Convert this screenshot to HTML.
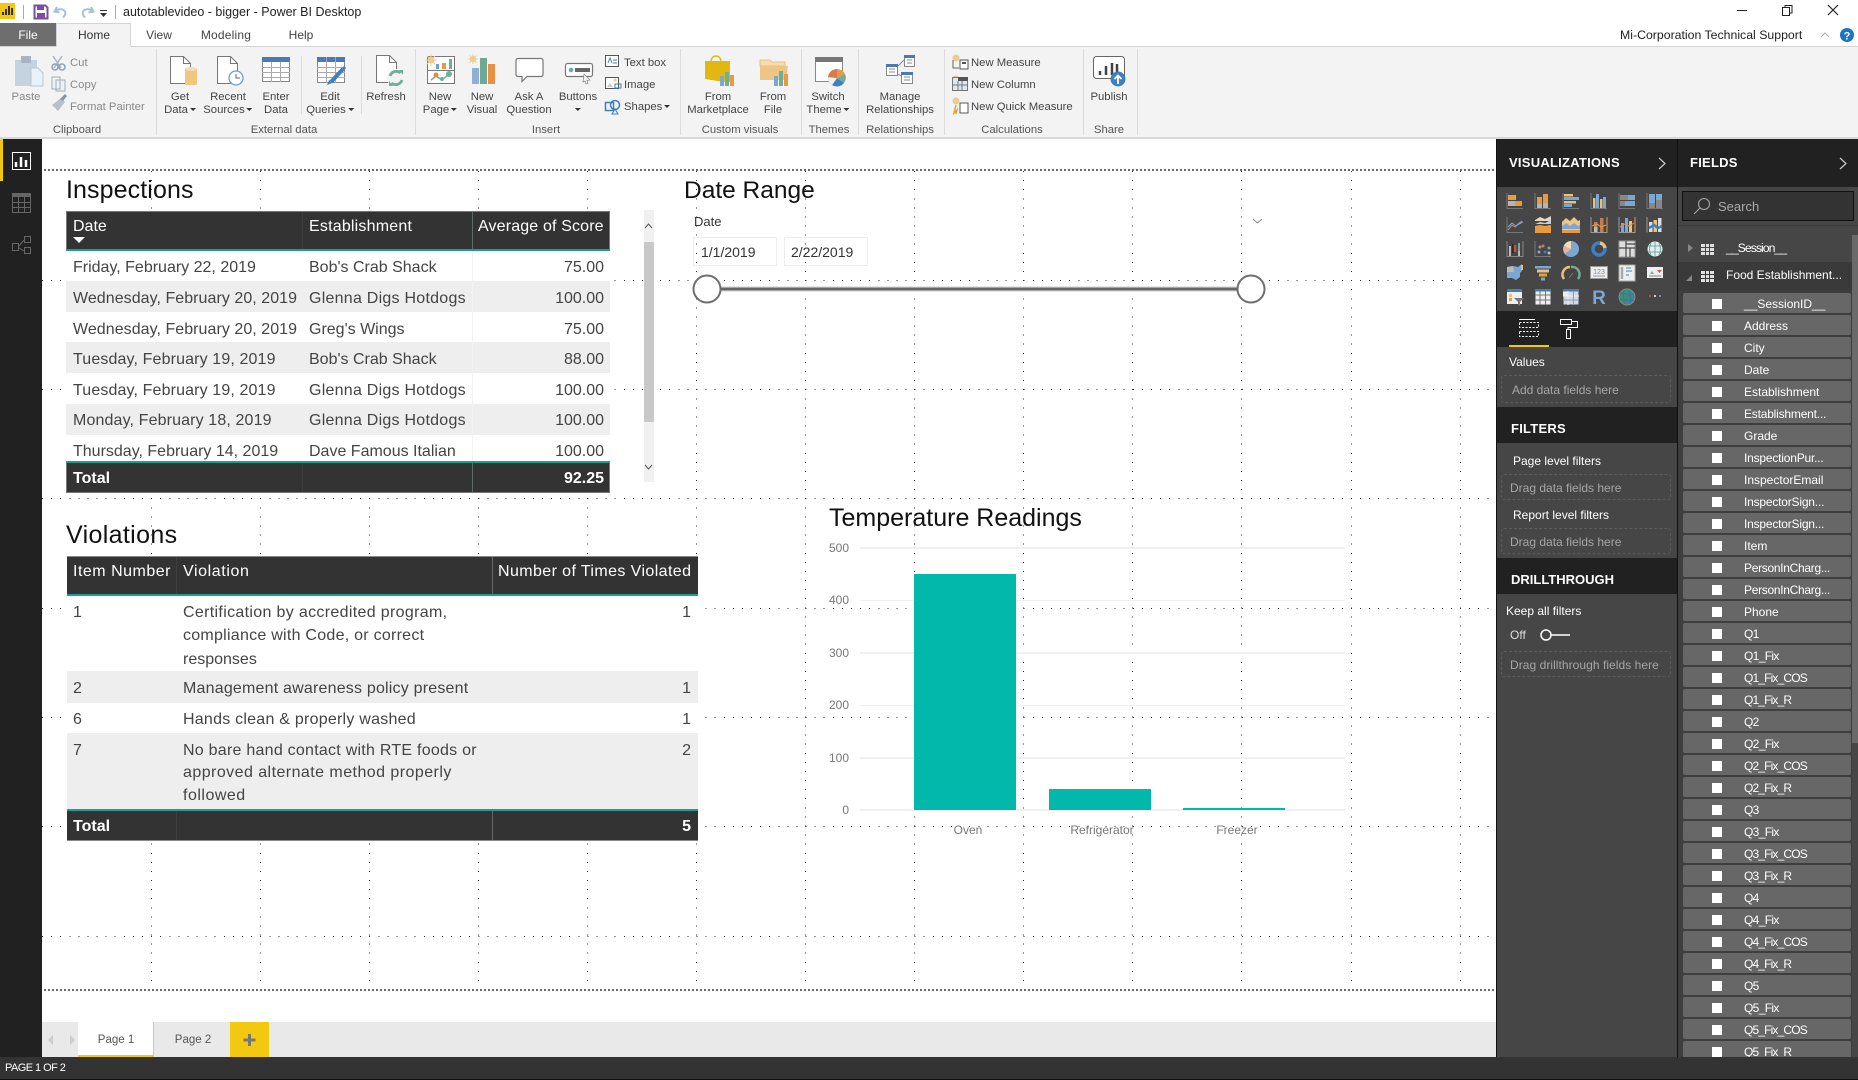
<!DOCTYPE html>
<html lang="en"><head><meta charset="utf-8"><title>autotablevideo - bigger - Power BI Desktop</title>
<style>
*{box-sizing:border-box}
html,body{margin:0;padding:0;width:1858px;height:1080px;overflow:hidden;background:#fff;font-family:"Liberation Sans",sans-serif}
.a,.t{position:absolute}
.t{white-space:nowrap;line-height:16px}
.c{transform:translateX(-50%);text-align:center}
.r{transform:translateX(-100%);text-align:right}
.rb{font-size:11.3px;color:#444;line-height:13px}
.rl{font-size:11.3px;color:#555;line-height:13px}
.ar{display:inline-block;width:0;height:0;border-left:3px solid transparent;border-right:3px solid transparent;border-top:3px solid #333;vertical-align:2px;margin-left:2px}
.sep{position:absolute;top:49px;width:1px;height:86px;background:#dcdcdc}
.sep2{position:absolute;width:1px;background:#dcdcdc}
.h{font-size:16px;color:#fff}
.b{font-size:16px;color:#444}
.tt{font-size:25px;color:#111;line-height:30px}
.ph{font-size:13px;font-weight:bold;color:#fff;letter-spacing:.25px}
.dz{position:absolute;border:1px dashed #5c5c5c;border-radius:3px;left:1501px;width:170px}
.g{font-size:12px;color:#a6a6a6}
.w{font-size:12px;color:#fff}
#fl{position:absolute;left:1683px;top:293px;width:168px}
.f{position:relative;height:20px;margin-bottom:2px;background:#676767;border-radius:2px;color:#fff;font-size:12px;line-height:22px;padding-left:61px;white-space:nowrap}
.f:before{content:"";position:absolute;left:29px;top:6px;width:10px;height:10px;background:#fff}
.q{letter-spacing:-.65px}
.k{letter-spacing:-.85px}
.e{letter-spacing:-.2px}
.ax{font-size:12px;color:#777}
</style></head><body>

<!-- dot grid -->
<svg class="a" style="left:0;top:0" width="1858" height="1080" shape-rendering="crispEdges">
<g stroke="#333" stroke-width="1" stroke-dasharray="1 8.09">
<line x1="42" y1="280.5" x2="1496" y2="280.5"/><line x1="42" y1="389.5" x2="1496" y2="389.5"/><line x1="42" y1="498.5" x2="1496" y2="498.5"/><line x1="42" y1="608.5" x2="1496" y2="608.5"/><line x1="42" y1="717.5" x2="1496" y2="717.5"/><line x1="42" y1="826.5" x2="1496" y2="826.5"/><line x1="42" y1="936.5" x2="1496" y2="936.5"/>
<line x1="151.5" y1="171" x2="151.5" y2="988"/><line x1="260.5" y1="171" x2="260.5" y2="988"/><line x1="369.5" y1="171" x2="369.5" y2="988"/><line x1="478.5" y1="171" x2="478.5" y2="988"/><line x1="587.5" y1="171" x2="587.5" y2="988"/><line x1="696.5" y1="171" x2="696.5" y2="988"/><line x1="805.5" y1="171" x2="805.5" y2="988"/><line x1="914.5" y1="171" x2="914.5" y2="988"/><line x1="1023.5" y1="171" x2="1023.5" y2="988"/><line x1="1132.5" y1="171" x2="1132.5" y2="988"/><line x1="1241.5" y1="171" x2="1241.5" y2="988"/><line x1="1351.5" y1="171" x2="1351.5" y2="988"/><line x1="1460.5" y1="171" x2="1460.5" y2="988"/>
</g></svg>
<div class="a" style="left:44px;top:169px;width:1452px;height:2px;background:repeating-linear-gradient(90deg,#6a6a6a 0 2px,transparent 2px 4px)"></div>
<div class="a" style="left:44px;top:989px;width:1452px;height:2px;background:repeating-linear-gradient(90deg,#6a6a6a 0 2px,transparent 2px 4px)"></div>

<!-- title bar -->
<div class="t" style="left:123px;top:4px;font-size:12.5px;color:#222">autotablevideo - bigger - Power BI Desktop</div>
<!-- tabs -->
<div class="a" style="left:0;top:23px;width:56px;height:23px;background:#6e6e6e"></div>
<div class="a" style="left:56px;top:23px;width:75px;height:24px;background:#f3f3f3;border:1px solid #d4d4d4;border-bottom:0;z-index:2"></div>
<div class="a" style="left:0;top:46px;width:1858px;height:93px;background:#f3f3f3;border-top:1px solid #d4d4d4;border-bottom:2px solid #d8d8d8"></div>
<div class="t c" style="left:28px;top:27px;font-size:12px;color:#fff;z-index:3">File</div>
<div class="t c" style="left:94px;top:27px;font-size:12px;color:#333;z-index:3">Home</div>
<div class="t c" style="left:159px;top:27px;font-size:12px;color:#444">View</div>
<div class="t c" style="left:226px;top:27px;font-size:12px;color:#444;letter-spacing:.2px">Modeling</div>
<div class="t c" style="left:301px;top:27px;font-size:12px;color:#444">Help</div>
<div class="t" style="left:1620px;top:27px;font-size:12.3px;color:#222">Mi-Corporation Technical Support</div>

<!-- ribbon text -->
<div class="sep" style="left:156px"></div><div class="sep" style="left:415px"></div><div class="sep" style="left:680px"></div><div class="sep" style="left:801px"></div><div class="sep" style="left:858px"></div><div class="sep" style="left:944px"></div><div class="sep" style="left:1083px"></div><div class="sep" style="left:1137px"></div>
<div class="sep2" style="left:301px;top:56px;height:58px"></div><div class="sep2" style="left:361px;top:56px;height:58px"></div>

<div class="t c rb" style="left:26px;top:91px;color:#888">Paste</div>
<div class="t rb" style="left:70px;top:57px;color:#888">Cut</div>
<div class="t rb" style="left:70px;top:79px;color:#888">Copy</div>
<div class="t rb" style="left:70px;top:101px;color:#888">Format Painter</div>
<div class="t c rl" style="left:77px;top:124px">Clipboard</div>

<div class="t c rb" style="left:180px;top:91px">Get<br>Data<i class="ar"></i></div>
<div class="t c rb" style="left:228px;top:91px">Recent<br>Sources<i class="ar"></i></div>
<div class="t c rb" style="left:276px;top:91px">Enter<br>Data</div>
<div class="t c rb" style="left:330px;top:91px">Edit<br>Queries<i class="ar"></i></div>
<div class="t c rb" style="left:386px;top:91px">Refresh</div>
<div class="t c rl" style="left:284px;top:124px">External data</div>

<div class="t c rb" style="left:440px;top:91px">New<br>Page<i class="ar"></i></div>
<div class="t c rb" style="left:482px;top:91px">New<br>Visual</div>
<div class="t c rb" style="left:529px;top:91px">Ask A<br>Question</div>
<div class="t c rb" style="left:578px;top:91px">Buttons<br><i class="ar" style="margin:0"></i></div>
<div class="t rb" style="left:624px;top:57px">Text box</div>
<div class="t rb" style="left:624px;top:79px">Image</div>
<div class="t rb" style="left:624px;top:101px">Shapes<i class="ar"></i></div>
<div class="t c rl" style="left:546px;top:124px">Insert</div>

<div class="t c rb" style="left:718px;top:91px">From<br>Marketplace</div>
<div class="t c rb" style="left:773px;top:91px">From<br>File</div>
<div class="t c rl" style="left:740px;top:124px">Custom visuals</div>
<div class="t c rb" style="left:828px;top:91px">Switch<br>Theme<i class="ar"></i></div>
<div class="t c rl" style="left:829px;top:124px">Themes</div>
<div class="t c rb" style="left:900px;top:91px">Manage<br>Relationships</div>
<div class="t c rl" style="left:900px;top:124px">Relationships</div>
<div class="t rb" style="left:971px;top:57px">New Measure</div>
<div class="t rb" style="left:971px;top:79px">New Column</div>
<div class="t rb" style="left:971px;top:101px">New Quick Measure</div>
<div class="t c rl" style="left:1012px;top:124px">Calculations</div>
<div class="t c rb" style="left:1109px;top:91px">Publish</div>
<div class="t c rl" style="left:1109px;top:124px">Share</div>

<!-- left nav -->
<div class="a" style="left:0;top:139px;width:42px;height:918px;background:#212121"></div>
<div class="a" style="left:0;top:139px;width:3px;height:42px;background:#f2c811"></div>

<!-- Inspections -->
<div class="t tt" style="left:66px;top:175px;letter-spacing:.1px">Inspections</div>
<div class="a" style="left:66px;top:251px;width:544px;height:30px;background:#fff"></div>
<div class="a" style="left:66px;top:281px;width:544px;height:31px;background:#eee"></div>
<div class="a" style="left:66px;top:312px;width:544px;height:30px;background:#fff"></div>
<div class="a" style="left:66px;top:342px;width:544px;height:31px;background:#eee"></div>
<div class="a" style="left:66px;top:373px;width:544px;height:31px;background:#fff"></div>
<div class="a" style="left:66px;top:404px;width:544px;height:31px;background:#eee"></div>
<div class="a" style="left:66px;top:435px;width:544px;height:27px;background:#fff"></div>
<div class="a" style="left:66px;top:211px;width:544px;height:40px;background:#333;border:1px solid #777;border-bottom:2px solid #1b9e94"></div>
<div class="a" style="left:66px;top:461px;width:544px;height:32px;background:#333;border:1px solid #777;border-top:2px solid #1b9e94"></div>
<div class="a" style="left:302px;top:212px;width:1px;height:37px;background:#3e3e3e"></div>
<div class="a" style="left:472px;top:212px;width:1px;height:37px;background:#5a6b6a"></div>
<div class="a" style="left:302px;top:463px;width:1px;height:29px;background:#3e3e3e"></div>
<div class="a" style="left:472px;top:463px;width:1px;height:29px;background:#5a6b6a"></div>
<div class="a" style="left:472px;top:251px;width:1px;height:210px;background:#f3f3f3"></div>
<div class="a" style="left:73px;top:237px;width:0;height:0;border-left:6px solid transparent;border-right:6px solid transparent;border-top:6px solid #fff"></div>
<div class="t h" style="left:73px;top:219px">Date</div>
<div class="t h" style="left:309px;top:219px;letter-spacing:.2px">Establishment</div>
<div class="t h" style="left:478px;top:219px;letter-spacing:.15px">Average of Score</div>
<div class="t b" style="left:73px;top:260px">Friday, February 22, 2019</div><div class="t b" style="left:309px;top:260px">Bob's Crab Shack</div><div class="t b r" style="left:604px;top:260px">75.00</div>
<div class="t b" style="left:73px;top:291px;letter-spacing:.05px">Wednesday, February 20, 2019</div><div class="t b" style="left:309px;top:291px;letter-spacing:.25px">Glenna Digs Hotdogs</div><div class="t b r" style="left:604px;top:291px">100.00</div>
<div class="t b" style="left:73px;top:322px;letter-spacing:.05px">Wednesday, February 20, 2019</div><div class="t b" style="left:309px;top:322px">Greg's Wings</div><div class="t b r" style="left:604px;top:322px">75.00</div>
<div class="t b" style="left:73px;top:352px;letter-spacing:.13px">Tuesday, February 19, 2019</div><div class="t b" style="left:309px;top:352px">Bob's Crab Shack</div><div class="t b r" style="left:604px;top:352px">88.00</div>
<div class="t b" style="left:73px;top:383px;letter-spacing:.13px">Tuesday, February 19, 2019</div><div class="t b" style="left:309px;top:383px;letter-spacing:.25px">Glenna Digs Hotdogs</div><div class="t b r" style="left:604px;top:383px">100.00</div>
<div class="t b" style="left:73px;top:413px;letter-spacing:.13px">Monday, February 18, 2019</div><div class="t b" style="left:309px;top:413px;letter-spacing:.25px">Glenna Digs Hotdogs</div><div class="t b r" style="left:604px;top:413px">100.00</div>
<div class="t b" style="left:73px;top:444px">Thursday, February 14, 2019</div><div class="t b" style="left:309px;top:444px">Dave Famous Italian</div><div class="t b r" style="left:604px;top:444px">100.00</div>
<div class="t h" style="left:73px;top:471px;font-weight:bold">Total</div><div class="t h r" style="left:604px;top:471px;font-weight:bold">92.25</div>
<div class="a" style="left:644px;top:210px;width:10px;height:272px;background:#f0f0f0"></div>
<div class="a" style="left:644px;top:242px;width:10px;height:180px;background:#c8c8c8"></div>

<!-- Violations -->
<div class="t tt" style="left:66px;top:520px;letter-spacing:.35px">Violations</div>
<div class="a" style="left:67px;top:596px;width:631px;height:75px;background:#fff"></div>
<div class="a" style="left:67px;top:671px;width:631px;height:32px;background:#eee"></div>
<div class="a" style="left:67px;top:703px;width:631px;height:30px;background:#fff"></div>
<div class="a" style="left:67px;top:733px;width:631px;height:77px;background:#eee"></div>
<div class="a" style="left:67px;top:556px;width:631px;height:40px;background:#333;border-top:1px solid #888;border-bottom:2px solid #1b9e94"></div>
<div class="a" style="left:67px;top:809px;width:631px;height:32px;background:#333;border-top:2px solid #1b9e94;border-bottom:1px solid #888"></div>
<div class="a" style="left:176px;top:557px;width:1px;height:37px;background:#3e3e3e"></div>
<div class="a" style="left:492px;top:557px;width:1px;height:37px;background:#666"></div>
<div class="a" style="left:176px;top:811px;width:1px;height:29px;background:#3e3e3e"></div>
<div class="a" style="left:492px;top:811px;width:1px;height:29px;background:#666"></div>
<div class="t h" style="left:73px;top:564px;letter-spacing:.5px">Item Number</div><div class="t h" style="left:183px;top:564px;letter-spacing:.6px">Violation</div><div class="t h" style="left:498px;top:564px;letter-spacing:.4px">Number of Times Violated</div>
<div class="t b" style="left:73px;top:605px">1</div><div class="t b" style="left:183px;top:605px;letter-spacing:.33px">Certification by accredited program,</div><div class="t b r" style="left:691px;top:605px">1</div>
<div class="t b" style="left:183px;top:628px;letter-spacing:.26px">compliance with Code, or correct</div>
<div class="t b" style="left:183px;top:652px">responses</div>
<div class="t b" style="left:73px;top:681px">2</div><div class="t b" style="left:183px;top:681px;letter-spacing:.2px">Management awareness policy present</div><div class="t b r" style="left:691px;top:681px">1</div>
<div class="t b" style="left:73px;top:712px">6</div><div class="t b" style="left:183px;top:712px;letter-spacing:.24px">Hands clean &amp; properly washed</div><div class="t b r" style="left:691px;top:712px">1</div>
<div class="t b" style="left:73px;top:743px">7</div><div class="t b" style="left:183px;top:743px;letter-spacing:.25px">No bare hand contact with RTE foods or</div><div class="t b r" style="left:691px;top:743px">2</div>
<div class="t b" style="left:183px;top:765px;letter-spacing:.45px">approved alternate method properly</div>
<div class="t b" style="left:183px;top:788px;letter-spacing:.5px">followed</div>
<div class="t h" style="left:73px;top:819px;font-weight:bold">Total</div><div class="t h r" style="left:691px;top:819px;font-weight:bold">5</div>

<!-- Date range -->
<div class="t tt" style="left:684px;top:176px;font-size:24.5px">Date Range</div>
<div class="t" style="left:694px;top:214px;font-size:13px;color:#333">Date</div>
<div class="a" style="left:693px;top:237px;width:84px;height:29px;border:1px solid #eee"></div>
<div class="a" style="left:784px;top:237px;width:84px;height:29px;border:1px solid #eee"></div>
<div class="t" style="left:701px;top:244px;font-size:14px;color:#333">1/1/2019</div>
<div class="t" style="left:791px;top:244px;font-size:14px;color:#333">2/22/2019</div>

<!-- chart -->
<div class="t tt" style="left:829px;top:503px;font-size:25px">Temperature Readings</div>
<div class="t ax r" style="left:849px;top:540px">500</div>
<div class="t ax r" style="left:849px;top:592px">400</div>
<div class="t ax r" style="left:849px;top:645px">300</div>
<div class="t ax r" style="left:849px;top:697px">200</div>
<div class="t ax r" style="left:849px;top:750px">100</div>
<div class="t ax r" style="left:849px;top:802px">0</div>
<div class="a" style="left:860px;top:547px;width:485px;height:2px;background:#f0f0f0"></div>
<div class="a" style="left:860px;top:600px;width:485px;height:1px;background:#f0f0f0"></div>
<div class="a" style="left:860px;top:652px;width:485px;height:2px;background:#f0f0f0"></div>
<div class="a" style="left:860px;top:705px;width:485px;height:1px;background:#f0f0f0"></div>
<div class="a" style="left:860px;top:757px;width:485px;height:2px;background:#f0f0f0"></div>
<div class="a" style="left:860px;top:809px;width:485px;height:2px;background:#f0f0f0"></div>
<div class="a" style="left:914px;top:574px;width:102px;height:236px;background:#01b8aa"></div>
<div class="a" style="left:1049px;top:789px;width:102px;height:21px;background:#01b8aa"></div>
<div class="a" style="left:1183px;top:808px;width:102px;height:2px;background:#01b8aa"></div>
<div class="t ax c" style="left:968px;top:822px">Oven</div>
<div class="t ax c" style="left:1102px;top:822px">Refrigerator</div>
<div class="t ax c" style="left:1237px;top:822px">Freezer</div>

<!-- page tabs -->
<div class="a" style="left:42px;top:1022px;width:1454px;height:35px;background:#e9e9e9"></div>
<div class="a" style="left:78px;top:1022px;width:76px;height:35px;background:#fff;border-right:1px solid #c8c8c8;border-bottom:2px solid #f2c811"></div>
<div class="t c" style="left:116px;top:1032px;font-size:11.5px;color:#555">Page 1</div>
<div class="t c" style="left:193px;top:1032px;font-size:11.5px;color:#555">Page 2</div>
<div class="a" style="left:230px;top:1022px;width:39px;height:35px;background:#f2c811"></div>

<!-- status -->
<div class="a" style="left:0;top:1057px;width:1858px;height:23px;background:#333;border-bottom:1px solid #111"></div>
<div class="t" style="left:5px;top:1060px;font-size:11px;letter-spacing:-.55px;color:#fff">PAGE 1 OF 2</div>

<!-- right panels -->
<div class="a" style="left:1496px;top:139px;width:362px;height:918px;background:#464646"></div>
<div class="a" style="left:1496px;top:139px;width:1px;height:918px;background:#111"></div>
<div class="a" style="left:1677px;top:139px;width:1px;height:918px;background:#111"></div>
<div class="a" style="left:1497px;top:139px;width:180px;height:48px;background:#212121"></div>
<div class="a" style="left:1678px;top:139px;width:180px;height:48px;background:#212121"></div>
<div class="t ph" style="left:1509px;top:155px">VISUALIZATIONS</div>
<div class="t ph" style="left:1690px;top:155px">FIELDS</div>
<div class="a" style="left:1497px;top:311px;width:180px;height:36px;background:#212121"></div>
<div class="a" style="left:1509px;top:345px;width:40px;height:2px;background:#f2c811"></div>
<div class="t w" style="left:1509px;top:354px">Values</div>
<div class="dz" style="top:375px;height:28px"></div>
<div class="t g" style="left:1512px;top:382px">Add data fields here</div>
<div class="a" style="left:1497px;top:407px;width:180px;height:36px;background:#212121"></div>
<div class="t ph" style="left:1511px;top:421px">FILTERS</div>
<div class="t w" style="left:1513px;top:453px">Page level filters</div>
<div class="dz" style="top:474px;height:26px"></div>
<div class="t g" style="left:1510px;top:480px">Drag data fields here</div>
<div class="t w" style="left:1513px;top:507px">Report level filters</div>
<div class="dz" style="top:528px;height:26px"></div>
<div class="t g" style="left:1510px;top:534px">Drag data fields here</div>
<div class="a" style="left:1497px;top:558px;width:180px;height:36px;background:#212121"></div>
<div class="t ph" style="left:1511px;top:572px;letter-spacing:0">DRILLTHROUGH</div>
<div class="t w" style="left:1506px;top:603px">Keep all filters</div>
<div class="t w" style="left:1510px;top:627px;color:#ddd">Off</div>
<div class="dz" style="top:651px;height:26px"></div>
<div class="t g" style="left:1510px;top:657px;letter-spacing:.05px">Drag drillthrough fields here</div>

<div class="a" style="left:1682px;top:191px;width:172px;height:30px;background:#333;border:1px solid #111"></div>
<div class="t" style="left:1718px;top:199px;font-size:13px;color:#aaa">Search</div>
<div class="a" style="left:1678px;top:225px;width:180px;height:1px;background:#3a3a3a"></div>
<div class="t" style="left:1726px;top:240px;font-size:12.3px;letter-spacing:-1px;color:#fff">__Session__</div>
<div class="a" style="left:1678px;top:262px;width:174px;height:28px;background:#3a3a3a"></div>
<div class="t" style="left:1726px;top:267px;font-size:12px;color:#fff">Food Establishment...</div>
<div class="a" style="left:1678px;top:290px;width:174px;height:767px;background:#3e3e3e"></div>
<div class="a" style="left:1852px;top:235px;width:6px;height:508px;background:#6a6a6a"></div>

<div id="fl" class="a" style="overflow:hidden;height:764px">
<div class="f">__SessionID__</div><div class="f">Address</div><div class="f">City</div><div class="f">Date</div><div class="f">Establishment</div><div class="f e">Establishment...</div><div class="f">Grade</div><div class="f e">InspectionPur...</div><div class="f">InspectorEmail</div><div class="f e">InspectorSign...</div><div class="f e">InspectorSign...</div><div class="f">Item</div><div class="f" style="letter-spacing:-.3px">PersonInCharg...</div><div class="f" style="letter-spacing:-.3px">PersonInCharg...</div><div class="f">Phone</div><div class="f q">Q1</div><div class="f q">Q1_Fix</div><div class="f k">Q1_Fix_COS</div><div class="f k">Q1_Fix_R</div><div class="f q">Q2</div><div class="f q">Q2_Fix</div><div class="f k">Q2_Fix_COS</div><div class="f k">Q2_Fix_R</div><div class="f q">Q3</div><div class="f q">Q3_Fix</div><div class="f k">Q3_Fix_COS</div><div class="f k">Q3_Fix_R</div><div class="f q">Q4</div><div class="f q">Q4_Fix</div><div class="f k">Q4_Fix_COS</div><div class="f k">Q4_Fix_R</div><div class="f q">Q5</div><div class="f q">Q5_Fix</div><div class="f k">Q5_Fix_COS</div><div class="f k">Q5_Fix_R</div>
</div>

<!-- icon overlay -->
<svg class="a" style="left:0;top:0;z-index:5;pointer-events:none" width="1858" height="1080" fill="none">
<!-- title bar -->
<rect x="0" y="3" width="15" height="16" fill="#f2c811"/><path d="M3 15v-3M6 15V9M9 15V6M12 15V8" stroke="#333" stroke-width="2"/>
<path d="M23.500 5v14" stroke="#aaa"/>
<path d="M34.500 5.500h11l2 2v11h-13z" stroke="#7a4f9e" stroke-width="2"/><rect x="37" y="6" width="7" height="4" fill="#7a4f9e"/><rect x="37" y="13" width="8" height="5" fill="#7a4f9e"/>
<path d="M57 7l-2.500 4.500 5 1M55 11.500c3-3 8-3 10 0 1 2 0 4-2 6" stroke="#a9bfd6" stroke-width="2"/>
<path d="M91 7l2.500 4.500-5 1M93 11.500c-3-3-8-3-10 0-1 2 0 4 2 6" stroke="#a9bfd6" stroke-width="2"/>
<path d="M100 10.500h7" stroke="#333"/><path d="M100 13l3.500 4 3.500-4z" fill="#333"/>
<path d="M115.500 5v14" stroke="#aaa"/>
<!-- window controls -->
<path d="M1737 10.500h10" stroke="#222"/><path d="M1782.500 7.500h7v8h-7zM1785 7V5.500h7v7.500h-2.500" stroke="#222"/><path d="M1828 5l10 10M1838 5l-10 10" stroke="#222" stroke-width="1.200"/>
<path d="M1821 37l4-4 4 4" stroke="#aaa"/>
<circle cx="1847" cy="35" r="7" fill="#1b74c8"/><text x="1847" y="39.500" font-family="Liberation Sans" font-size="11" font-weight="bold" fill="#fff" text-anchor="middle">?</text>

<!-- paste / clipboard -->
<rect x="15" y="60" width="22" height="26" fill="#c5d2e0"/><rect x="21" y="56" width="10" height="7" fill="#a8b4c2"/><path d="M31 68h7l5 5v13H31z" fill="#eaf1f8" stroke="#b4c8dc"/>
<path d="M53 56l8 12M62 56l-8 12" stroke="#a9b4c0" stroke-width="1.500"/><circle cx="55" cy="67" r="3" stroke="#8aa0b8" stroke-width="1.500"/><circle cx="62" cy="67" r="3" stroke="#8aa0b8" stroke-width="1.500"/>
<path d="M52 77h8v12h-8zM56 80h9v11h-9z" fill="#eef2f6" stroke="#a0aebc"/>
<path d="M52 105l9-7 4 4-7 9z" fill="#b8c0c8"/><path d="M60 99l5-5 2 2-4 5z" fill="#8a96a2"/>
<!-- get data -->
<path d="M170.500 56.500h13l7 7v20h-20z" fill="#fff" stroke="#777"/><path d="M183.500 56.500v7h7" stroke="#777"/>
<rect x="185" y="69" width="12" height="16" rx="1" fill="#efc77f"/><ellipse cx="191" cy="69" rx="6" ry="2" fill="#f5dcae"/>
<!-- recent -->
<path d="M217.500 56.500h13l7 7v20h-20z" fill="#fff" stroke="#777"/><path d="M230.500 56.500v7h7" stroke="#777"/>
<circle cx="236" cy="78" r="7" fill="#fff" stroke="#6f9fcf" stroke-width="1.300"/><path d="M236 74v4h4" stroke="#666"/>
<!-- enter data -->
<rect x="262.500" y="57.500" width="27" height="24" fill="#fff" stroke="#888"/><rect x="262" y="57" width="28" height="5" fill="#4a7ab0"/><path d="M262 67.500h28M262 72.500h28M262 77.500h28M271.500 62v20M280.500 62v20" stroke="#aaa"/>
<!-- edit queries -->
<rect x="317.500" y="57.500" width="27" height="25" fill="#fff" stroke="#888"/><rect x="317" y="57" width="28" height="5" fill="#4a7ab0"/><path d="M317 67.500h28M317 72.500h28M317 77.500h28M326.500 57v26M335.500 57v26" stroke="#aaa"/>
<path d="M331 82l12-13" stroke="#3f7fbf" stroke-width="4"/><path d="M327 85l2-5 3 3z" fill="#3f7fbf"/><path d="M343 69l2-2" stroke="#3f7fbf" stroke-width="3"/>
<!-- refresh -->
<path d="M376.500 55.500h13l7 7v20h-20z" fill="#fff" stroke="#777"/><path d="M389.500 55.500v7h7" stroke="#777"/>
<circle cx="396" cy="78" r="9" fill="#f3f3f3"/><path d="M390 76a6.500 6.500 0 0 1 10.500-3M402 80a6.500 6.500 0 0 1-10.500 3" stroke="#6fae9b" stroke-width="2.800"/><path d="M399 70l4 0 0 5zM393 86l-4 0 0-5z" fill="#6fae9b"/>
<!-- new page -->
<rect x="427.500" y="56.500" width="27" height="27" fill="#fff" stroke="#777"/><path d="M428 70.500h26" stroke="#777"/><path d="M431 80l5-4 6 4 6-5" stroke="#6fae9b" stroke-width="1.500"/><circle cx="436" cy="75" r="2.500" fill="#ea8a3c"/><circle cx="442" cy="79" r="2" fill="#6fae9b"/><circle cx="449" cy="74" r="3" fill="#6fae9b"/><rect x="436" y="64" width="3" height="5" fill="#6f9fcf"/><rect x="442" y="63" width="4" height="6" fill="#ea9a3c"/><rect x="449" y="59" width="3" height="10" fill="#6fae9b"/>
<circle cx="431" cy="60" r="3.500" fill="#eecb8e"/><path d="M431 54v12M425 60h12M427 56l8 8M435 56l-8 8" stroke="#eecb8e"/>
<!-- new visual -->
<rect x="472" y="68" width="7" height="16" fill="#8db0d4"/><rect x="480" y="58" width="7" height="26" fill="#70a896"/><rect x="488" y="64" width="7" height="20" fill="#ea8f45"/>
<circle cx="473" cy="59" r="3" fill="#eecb8e"/><path d="M473 54v10M468 59h10M469.500 55.500l7 7M476.500 55.500l-7 7" stroke="#eecb8e"/>
<!-- ask -->
<path d="M518 58.500h23a2 2 0 0 1 2 2v14a2 2 0 0 1-2 2h-14l-5 5v-5h-4a2 2 0 0 1-2-2v-14a2 2 0 0 1 2-2z" fill="#fff" stroke="#777" stroke-width="1.200"/>
<!-- buttons -->
<rect x="565.500" y="63.500" width="27" height="13" rx="2" fill="#fff" stroke="#777" stroke-width="1.200"/><circle cx="571" cy="70" r="2.300" fill="#6f9fcf"/><rect x="575" y="68" width="15" height="4" fill="#666"/><path d="M584 74l6 6-3 .5 1 3-2 .5-1-3-2 1z" fill="#f3f3f3" stroke="#888" stroke-width=".7"/>
<!-- text box / image / shapes -->
<rect x="605.500" y="55.500" width="13" height="11" fill="#fff" stroke="#555"/><path d="M608 63l2-5 2 5M613 60h4M613 63h4" stroke="#3f7fbf"/>
<rect x="605.500" y="77.500" width="13" height="11" fill="#fff" stroke="#555"/><path d="M607 87l3-4 3 4z" fill="#bcd0e4"/><circle cx="615" cy="80" r="1.500" fill="#eecb8e"/><rect x="615" y="84" width="6" height="4" stroke="#3f7fbf"/>
<rect x="605.500" y="102.500" width="8" height="8" stroke="#3f7fbf" stroke-width="1.500"/><circle cx="615" cy="105" r="4.500" stroke="#3f7fbf" stroke-width="1.500"/><path d="M612 114l3-5 3 5z" stroke="#3f7fbf"/>
<!-- marketplace -->
<path d="M711 62c0-8 10-8 10 0" stroke="#e2b70f" stroke-width="1.500"/><path d="M705 61h25v21l-6 0-19-3z" fill="#e2b70f"/>
<rect x="720" y="76" width="4" height="10" fill="#7ba7d3"/><rect x="725" y="72" width="4" height="14" fill="#6fae9b"/><rect x="730" y="75" width="4" height="11" fill="#ea9a3c"/>
<!-- from file -->
<path d="M760 60h10l2 2h13v4h-25z" fill="#f5ddb2" stroke="#e8c27c"/><path d="M760 66h28l-2 14h-26z" fill="#eec584"/>
<rect x="774" y="76" width="4" height="10" fill="#7ba7d3"/><rect x="779" y="71" width="4" height="15" fill="#6fae9b"/><rect x="784" y="74" width="4" height="12" fill="#ea9a3c"/>
<!-- switch theme -->
<rect x="815.500" y="57.500" width="27" height="24" fill="#fff" stroke="#888"/><rect x="815" y="57" width="28" height="5" fill="#777"/>
<path d="M837 78l0-9a9 9 0 0 1 8 5z" fill="#ea9a3c"/><path d="M837 78l8-4a9 9 0 0 1-1 9z" fill="#6fae9b"/><path d="M837 78l7 5a9 9 0 0 1-12 2z" fill="#3f7fbf"/><path d="M837 78l-5 7a9 9 0 0 1-4-8z" fill="#f3f3f3" stroke="#ccc" stroke-width=".5"/><path d="M837 78l-9-1a9 9 0 0 1 9-8z" fill="#d97a4a"/>
<!-- relationships -->
<rect x="886.500" y="64.500" width="11" height="11" fill="#fff" stroke="#888"/><rect x="886" y="64" width="12" height="3" fill="#4a7ab0"/>
<rect x="904.500" y="55.500" width="10" height="11" fill="#fff" stroke="#888"/><rect x="904" y="55" width="11" height="3" fill="#4a7ab0"/>
<rect x="901.500" y="72.500" width="11" height="11" fill="#fff" stroke="#888"/><rect x="901" y="72" width="12" height="3" fill="#4a7ab0"/>
<path d="M898 66l6-6M898 74l3 2M889 69h6M889 72h6M907 60h5M907 63h5M904 77h6M904 80h6" stroke="#888"/>
<!-- calculations -->
<circle cx="956" cy="58" r="3.500" fill="#eecb8e"/><path d="M953 60v8h6" stroke="#666"/><rect x="960" y="60" width="8" height="9" fill="#fff" stroke="#555"/><rect x="962" y="62" width="4" height="2" fill="#555"/>
<circle cx="956" cy="79" r="3.500" fill="#eecb8e"/><rect x="952.500" y="77.500" width="15" height="13" fill="#dfe7ef" stroke="#777"/><rect x="958" y="77" width="10" height="4" fill="#555"/><path d="M958 81v9M962 81v9M952 85h16" stroke="#777"/>
<circle cx="956" cy="101" r="3.500" fill="#eecb8e"/><path d="M956 105l-2 8 3-3-1 4" stroke="#e0a23c" stroke-width="1.500"/><rect x="960" y="103" width="8" height="10" fill="#fff" stroke="#555"/>
<!-- publish -->
<rect x="1093.500" y="56.500" width="31" height="22" rx="3" fill="#fff" stroke="#666"/><path d="M1100 75v-4M1106 75v-9M1112 75v-12M1117 72v-8" stroke="#444" stroke-width="2.500"/>
<circle cx="1118" cy="79" r="7.500" fill="#3f7fbf"/><path d="M1118 84v-8M1114.500 79l3.500-3.500 3.500 3.500" stroke="#fff" stroke-width="1.800"/>

<!-- left nav -->
<rect x="12.500" y="152.500" width="18" height="17" stroke="#fff"/><path d="M16 167v-5M21 167v-10M26 167v-7" stroke="#fff" stroke-width="2.500"/>
<rect x="12.500" y="193.500" width="18" height="19" stroke="#666"/><rect x="12" y="193" width="19" height="4" fill="#666"/><path d="M12 202.500h19M12 207.500h19M18.500 193v20M24.500 193v20" stroke="#666"/>
<path d="M12.500 243.500h6v7h-6zM24.500 236.500h6v6h-6zM24.500 247.500h6v6h-6zM19 246l5-6M19 248l5 3" stroke="#666"/>

<!-- inspection scrollbar arrows -->
<path d="M645 228l3.500-4 3.500 4M645 465l3.500 4 3.500-4" stroke="#555"/>
<!-- slicer -->
<path d="M1253 219l4.500 4 4.500-4" stroke="#888"/>
<path d="M721 289h517" stroke="#e6e6e6" stroke-width="6"/><path d="M721 289h517" stroke="#666" stroke-width="3"/>
<circle cx="707" cy="289" r="13.500" fill="#fff" stroke="#6e6e6e" stroke-width="2"/><circle cx="1251" cy="289" r="13.500" fill="#fff" stroke="#6e6e6e" stroke-width="2"/>
<!-- tabs -->
<path d="M53 1035l-5 5 5 5z" fill="#ccc"/><path d="M70 1035l5 5-5 5z" fill="#ccc"/>
<path d="M249.500 1034v12M243.500 1040h12" stroke="#777" stroke-width="3"/>

<!-- panel chevrons -->
<path d="M1659 158l6 5.500-6 5.500M1840 158l6 5.500-6 5.500" stroke="#ccc" stroke-width="1.200"/>
<!-- search -->
<circle cx="1704" cy="204" r="5.500" stroke="#aaa"/><path d="M1700 208l-6 6" stroke="#aaa"/>
<!-- table icons -->
<path d="M1688 244l5 4-5 4z" fill="#888"/><path d="M1692 275v6h-6z" fill="#888"/>
<rect x="1701" y="244" width="13" height="11" fill="#e0e0e0"/><path d="M1705.500 244v11M1709.500 244v11M1701 247.500h13M1701 251.500h13" stroke="#464646"/>
<rect x="1701" y="271" width="13" height="11" fill="#e0e0e0"/><path d="M1705.500 271v11M1709.500 271v11M1701 274.500h13M1701 278.500h13" stroke="#3a3a3a"/>
<!-- format tabs -->
<path d="M1519 319.500h16" stroke="#fff"/><path d="M1519.500 322.500h19v5h-19zM1519.500 331.500h19v5h-19z" stroke="#fff" stroke-dasharray="2 1.500"/>
<path d="M1560.500 319.500h11v5h-11zM1572 321.500h5.500v6h-9.500v2M1566.500 329.500h4v9h-4z" stroke="#fff"/>
<!-- toggle -->
<circle cx="1546" cy="635" r="5" stroke="#fff" stroke-width="1.500"/><path d="M1551 635h19" stroke="#fff" stroke-width="1.500"/>

<!-- VIZ ICONS row 1 -->
<g transform="translate(1515 201)"><path d="M-8-8V7.500H8" stroke="#777"/><rect x="-7" y="-6" width="7" height="5" fill="#ea9a3c"/><rect x="0" y="-6" width="1" height="5" fill="#b5b5b5"/><rect x="-7" y="0" width="7" height="5" fill="#b5b5b5"/><rect x="0" y="0" width="7" height="5" fill="#ea9a3c"/></g>
<g transform="translate(1543 201)"><path d="M-8-8V7.500H8" stroke="#777"/><rect x="-6" y="-4" width="5" height="7" fill="#ea9a3c"/><rect x="-6" y="3" width="5" height="4" fill="#b5b5b5"/><rect x="0" y="-7" width="5" height="9" fill="#ea9a3c"/><rect x="0" y="2" width="5" height="5" fill="#b5b5b5"/></g>
<g transform="translate(1571 201)"><path d="M-8-8V7.500H8" stroke="#777"/><rect x="-7" y="-7" width="9" height="2.500" fill="#e8c27c"/><rect x="-7" y="-4" width="15" height="3" fill="#7ba7d3"/><rect x="-7" y="0" width="12" height="2.500" fill="#e8c27c"/><rect x="-7" y="3" width="8" height="3" fill="#7ba7d3"/></g>
<g transform="translate(1599 201)"><path d="M-8-8V7.500H8" stroke="#777"/><rect x="-6" y="-3" width="2.500" height="10" fill="#e8c27c"/><rect x="-3" y="-7" width="3" height="14" fill="#7ba7d3"/><rect x="1" y="-2" width="2.500" height="9" fill="#e8c27c"/><rect x="4" y="-4" width="3" height="11" fill="#7ba7d3"/></g>
<g transform="translate(1627 201)"><path d="M-8-8V7.500H8" stroke="#777"/><rect x="-7" y="-6" width="8" height="5" fill="#888"/><rect x="1" y="-6" width="7" height="5" fill="#7ba7d3"/><rect x="-7" y="0" width="5" height="5" fill="#888"/><rect x="-2" y="0" width="10" height="5" fill="#7ba7d3"/></g>
<g transform="translate(1655 201)"><path d="M-8-8V7.500H8" stroke="#777"/><rect x="-6" y="-7" width="6" height="9" fill="#7ba7d3"/><rect x="-6" y="2" width="6" height="5" fill="#888"/><rect x="1" y="-7" width="6" height="6" fill="#7ba7d3"/><rect x="1" y="-1" width="6" height="8" fill="#888"/></g>
<!-- row 2 -->
<g transform="translate(1515 225)"><path d="M-8-8V7.500H8" stroke="#777"/><path d="M-7 5l4-5 3 2 3-3 4-3" stroke="#d98a7a"/><path d="M-7 2l4-4 4 3 3-2 4-2" stroke="#7ba7d3"/></g>
<g transform="translate(1543 225)"><path d="M-8-5l5-3 5 2 6-3v5h-16z" fill="#e6d6bc"/><path d="M-8-1l5-2 5 1 6-3v4h-16z" fill="#bcd0e4"/><path d="M-8 1l5-1 5 1 6-1V8H-8z" fill="#ea9a3c"/></g>
<g transform="translate(1571 225)"><path d="M-9 8V-3l4-4 4 3 4-4 4 4 2-1V8z" fill="#eec584"/><path d="M-9 1l4-3 4 3 4-3 4 3 2-1v4H-9z" fill="#7ba7d3"/><path d="M-9 5H9v3H-9z" fill="#ea9a3c"/></g>
<g transform="translate(1599 225)"><path d="M-8-8V7.500H8M8-8V8" stroke="#999"/><path d="M8-8V8" stroke="#ea9a3c"/><rect x="-5" y="-3" width="3.500" height="5" fill="#c87a50"/><rect x="-5" y="2" width="3.500" height="5" fill="#bbb"/><rect x="1" y="-7" width="3.500" height="14" fill="#c87a50"/><path d="M-7 1l5-2 4 3 5-2" stroke="#ea9a3c"/></g>
<g transform="translate(1627 225)"><path d="M-8-8V7.500H8" stroke="#999"/><path d="M8-8V8" stroke="#ea9a3c"/><rect x="-6" y="-2" width="3" height="9" fill="#7ba7d3"/><rect x="-2" y="-7" width="3" height="14" fill="#7ba7d3"/><rect x="2" y="-4" width="3" height="11" fill="#e8c27c"/><path d="M-7 2l5-3 4 2 5-3" stroke="#d98a5a"/></g>
<g transform="translate(1655 225)"><path d="M-8-8V7.500" stroke="#999"/><rect x="-6" y="-3" width="3.500" height="10" fill="#ddd"/><rect x="-1.500" y="-5" width="3.500" height="12" fill="#e8c27c"/><rect x="3" y="-7" width="3.500" height="14" fill="#ddd"/><path d="M-6 3l5-3 4 3 4-2" stroke="#3f7fbf" stroke-width="2.500"/></g>
<!-- row 3 -->
<g transform="translate(1515 249)"><path d="M-8-8V7.500H8M8-8V8" stroke="#888"/><path d="M-5-3V7M4-6V7" stroke="#bbb" stroke-width="2"/><path d="M-2-5V4" stroke="#222" stroke-width="1.500"/><path d="M0-4V3" stroke="#c9503f" stroke-width="2.500"/><path d="M4-6V2" stroke="#6fae9b" stroke-width="2"/></g>
<g transform="translate(1543 249)"><path d="M-8-8V7.500H8" stroke="#777"/><circle cx="-4" cy="3" r="1.500" fill="#7ba7d3"/><circle cx="0" cy="-3" r="1.500" fill="#c87a50"/><circle cx="2" cy="3" r="1.500" fill="#3f7fbf"/><circle cx="6" cy="-1" r="1.500" fill="#6fae9b"/><circle cx="-3" cy="-2" r="1.500" fill="#999"/><circle cx="6" cy="4" r="1.500" fill="#bbb"/></g>
<g transform="translate(1571 249)"><circle r="8" fill="#7ba7d3"/><path d="M0 0V-8A8 8 0 0 0-7 -3z" fill="#f3dcb4"/><path d="M0 0L-7-3A8 8 0 0 0-6 5z" fill="#e8b0a0"/></g>
<g transform="translate(1599 249)"><circle r="6" stroke="#3f7fbf" stroke-width="3.500"/><path d="M1-6A6 6 0 0 1 6-1" stroke="#e8c27c" stroke-width="3.500"/></g>
<g transform="translate(1627 249)"><rect x="-8" y="-8" width="16" height="16" fill="#ddd" stroke="#999"/><path d="M-8-1H8M-1-8V8M3-1V8M-1-5H8" stroke="#464646" stroke-width="1.200"/></g>
<g transform="translate(1655 249)"><circle r="7.500" fill="#e6f0f2"/><path d="M-7-3H7M-7 3H7M0-7V7M-4-6C-6-2-6 2-4 6M4-6C6-2 6 2 4 6" stroke="#6fae9b"/></g>
<!-- row 4 -->
<g transform="translate(1515 273)"><path d="M-8-6l6-1 5 1 4-3v7l-2 2v4l-4 3-4-2-5 0z" fill="#7ba7d3"/><path d="M-8-6l6-1 1 6-7 0z" fill="#bbb"/><path d="M7-8v5" stroke="#e8c27c" stroke-width="2"/></g>
<g transform="translate(1543 273)"><path d="M-8-7H8v2.500H-8z" fill="#7ba7d3"/><path d="M-6-3.500H6v3H-6z" fill="#e8c27c"/><path d="M-4 .5H4v3H-4z" fill="#e0a23c"/><path d="M-2 4.500H2v3H-2z" fill="#7ba7d3"/></g>
<g transform="translate(1571 273)"><path d="M-7 6a7.500 7.500 0 0 1 6-12" stroke="#e8c27c" stroke-width="2.500"/><path d="M0-6a7.500 7.500 0 0 1 7 12" stroke="#6fae9b" stroke-width="2.500"/><path d="M-2 5l4-5" stroke="#777"/></g>
<g transform="translate(1599 273)"><rect x="-8.500" y="-6.500" width="17" height="12" fill="#eee" stroke="#999"/><text y="1" font-family="Liberation Sans" font-size="7" fill="#6f8fb0" text-anchor="middle">123</text><path d="M-6 3H6" stroke="#999"/></g>
<g transform="translate(1627 273)"><rect x="-8" y="-8" width="16" height="16" fill="#eee" stroke="#aaa"/><path d="M-5-6V6" stroke="#aaa" stroke-width="2.500"/><path d="M-1-5h5M-1-2h6M-1 2h3" stroke="#7ba7d3" stroke-width="1.500"/></g>
<g transform="translate(1655 273)"><rect x="-8" y="-6" width="16" height="11" fill="#eee"/><path d="M-5 1l2-3 2 3z" fill="#6fae9b"/><path d="M2-3h5l-2.500 3z" fill="#d9534f"/><path d="M-6 3h12" stroke="#888"/></g>
<!-- row 5 -->
<g transform="translate(1515 297)"><rect x="-8" y="-8" width="15" height="15" fill="#eee"/><rect x="-8" y="-8" width="15" height="3" fill="#4a7ab0"/><rect x="-6" y="-3" width="3" height="3" fill="#e8c27c"/><rect x="-6" y="1" width="3" height="3" fill="#e0a23c"/><path d="M-1 1H9L5 5v4l-2-1V5z" fill="#777"/></g>
<g transform="translate(1543 297)"><rect x="-7.500" y="-7.500" width="15" height="15" fill="#eee"/><rect x="-8" y="-8" width="16" height="2.500" fill="#4a7ab0"/><path d="M-3-6V8M2.500-6V8M-8-2H8M-8 3H8" stroke="#777"/></g>
<g transform="translate(1571 297)"><rect x="-7.500" y="-7.500" width="15" height="15" fill="#cfdbe8"/><rect x="-8" y="-8" width="16" height="2.500" fill="#4a7ab0"/><path d="M-3-6V8M-8-1H8" stroke="#eee"/><rect x="-8" y="-5.500" width="5" height="4" fill="#eee"/><path d="M2.500-6V8M-8 3H8" stroke="#99a"/></g>
<text x="1599" y="304" font-family="Liberation Sans" font-size="19" font-weight="bold" fill="#7ba7d3" text-anchor="middle">R</text>
<g transform="translate(1627 297)"><circle r="8" fill="#3f8f6f" stroke="#888"/><path d="M-7-3C-2-5 3-1 7-3M-7 3C-2 1 3 5 7 3M-3-7C-5 0-2 3-3 7M3-7C1 0 5 3 3 7" stroke="#3f6fbf" stroke-width="1.200"/></g>
<path d="M1649 296h2" stroke="#d9534f" stroke-width="1.500"/><path d="M1654 296h2" stroke="#fff" stroke-width="1.500"/><path d="M1659 296h2" stroke="#7ba7d3" stroke-width="1.500"/>
</svg>
</body></html>
